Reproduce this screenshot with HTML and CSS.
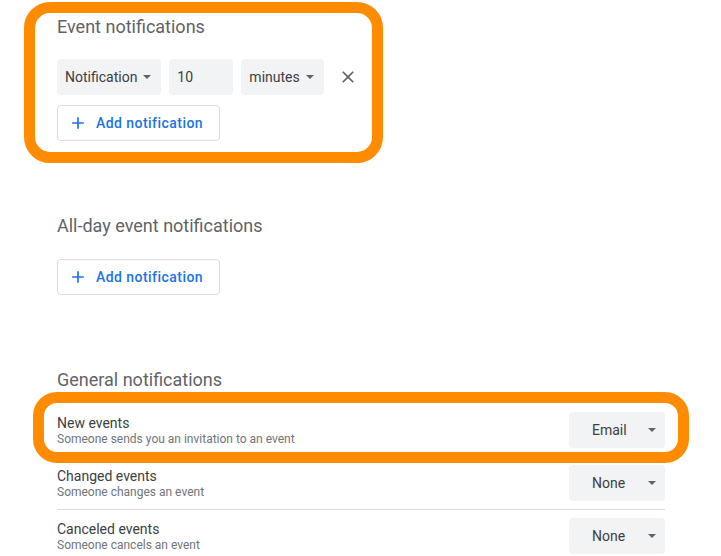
FILE: index.html
```html
<!DOCTYPE html>
<html>
<head>
<meta charset="utf-8">
<link rel="stylesheet" href="styles.css">
</head>
<body>
<div class="page">
  <section class="section">
    <h2 class="section-title">Event notifications</h2>
    <div class="notif-row">
      <div class="select">
        <span>Notification</span>
        <span class="arrow"></span>
      </div>
      <div class="input">10</div>
      <div class="select">
        <span>minutes</span>
        <span class="arrow"></span>
      </div>
      <div class="icon-btn">
        <svg width="20" height="20" viewBox="0 0 24 24"><path fill="#5f6368" d="M19 6.41L17.59 5 12 10.59 6.41 5 5 6.41 10.59 12 5 17.59 6.41 19 12 13.41 17.59 19 19 17.59 13.41 12z"/></svg>
      </div>
    </div>
    <button class="add-btn">
      <svg width="20" height="20" viewBox="0 0 24 24"><path fill="#1a73e8" d="M19 13h-6v6h-2v-6H5v-2h6V5h2v6h6v2z"/></svg>
      <span>Add notification</span>
    </button>
  </section>

  <section class="section allday">
    <h2 class="section-title">All-day event notifications</h2>
    <button class="add-btn">
      <svg width="20" height="20" viewBox="0 0 24 24"><path fill="#1a73e8" d="M19 13h-6v6h-2v-6H5v-2h6V5h2v6h6v2z"/></svg>
      <span>Add notification</span>
    </button>
  </section>

  <section class="section general">
    <h2 class="section-title">General notifications</h2>
    <div class="setting-row">
      <div class="setting-text">
        <div class="setting-name">New events</div>
        <div class="setting-desc">Someone sends you an invitation to an event</div>
      </div>
      <div class="select wide"><span>Email</span><span class="arrow"></span></div>
    </div>
    <div class="setting-row">
      <div class="setting-text">
        <div class="setting-name">Changed events</div>
        <div class="setting-desc">Someone changes an event</div>
      </div>
      <div class="select wide"><span>None</span><span class="arrow"></span></div>
    </div>
    <div class="setting-row">
      <div class="setting-text">
        <div class="setting-name">Canceled events</div>
        <div class="setting-desc">Someone cancels an event</div>
      </div>
      <div class="select wide"><span>None</span><span class="arrow"></span></div>
    </div>
  </section>

  <div class="highlight hl-1"></div>
  <div class="highlight hl-2"></div>
</div>
</body>
</html>
```

FILE: styles.css
```css
* { box-sizing: border-box; }
html, body {
  margin: 0;
  padding: 0;
  background: #ffffff;
}
body {
  font-family: Roboto, "Liberation Sans", Arial, sans-serif;
  color: #3c4043;
  overflow: hidden;
}
.page {
  position: relative;
  width: 721px;
  height: 556px;
  padding: 15px 0 0 57px;
}
.section {
  width: 608px;
  margin-bottom: 73px;
}
.section-title {
  margin: 0 0 20px 0;
  font-size: 18px;
  line-height: 24px;
  font-weight: 400;
  color: #5f6368;
}
.allday .section-title {
  margin-bottom: 21px;
}
.general .section-title {
  margin-bottom: 12px;
}
.notif-row {
  display: flex;
  align-items: center;
  gap: 8px;
  margin-bottom: 10px;
}
.select {
  display: flex;
  align-items: center;
  gap: 6px;
  height: 36px;
  padding: 0 10px 0 8px;
  background: #f1f3f4;
  border-radius: 4px;
  font-size: 14px;
  color: #3c4043;
}
.arrow {
  width: 0;
  height: 0;
  border-left: 4px solid transparent;
  border-right: 4px solid transparent;
  border-top: 4px solid #5f6368;
}
.select.wide {
  width: 96px;
  padding-left: 23px;
  padding-right: 9px;
  justify-content: space-between;
}
.input {
  width: 64px;
  height: 36px;
  padding: 0 8px;
  display: flex;
  align-items: center;
  background: #f1f3f4;
  border-radius: 4px;
  font-size: 14px;
  color: #3c4043;
}
.icon-btn {
  width: 40px;
  height: 36px;
  margin-left: -4px;
  display: flex;
  align-items: center;
  justify-content: center;
}
.add-btn {
  display: flex;
  align-items: center;
  gap: 8px;
  height: 36px;
  margin: 0;
  padding: 0 16px 0 10px;
  background: #ffffff;
  border: 1px solid #dadce0;
  border-radius: 4px;
  font-family: Roboto, "Liberation Sans", Arial, sans-serif;
  font-size: 14px;
  font-weight: 500;
  color: #1a73e8;
  letter-spacing: 0.45px;
}
.setting-row {
  display: flex;
  align-items: center;
  justify-content: space-between;
  padding: 8px 0;
  border-bottom: 1px solid #dadce0;
}
.setting-name {
  font-size: 14px;
  line-height: 17px;
  color: #3c4043;
}
.setting-desc {
  font-size: 12px;
  line-height: 14px;
  color: #70757a;
}
.highlight {
  position: absolute;
  border: 11px solid #ff8c00;
  pointer-events: none;
}
.hl-1 {
  left: 24px;
  top: 2px;
  width: 359px;
  height: 161px;
  border-radius: 26px;
}
.hl-2 {
  left: 33px;
  top: 392px;
  width: 656px;
  height: 71px;
  border-radius: 24px;
}
```
